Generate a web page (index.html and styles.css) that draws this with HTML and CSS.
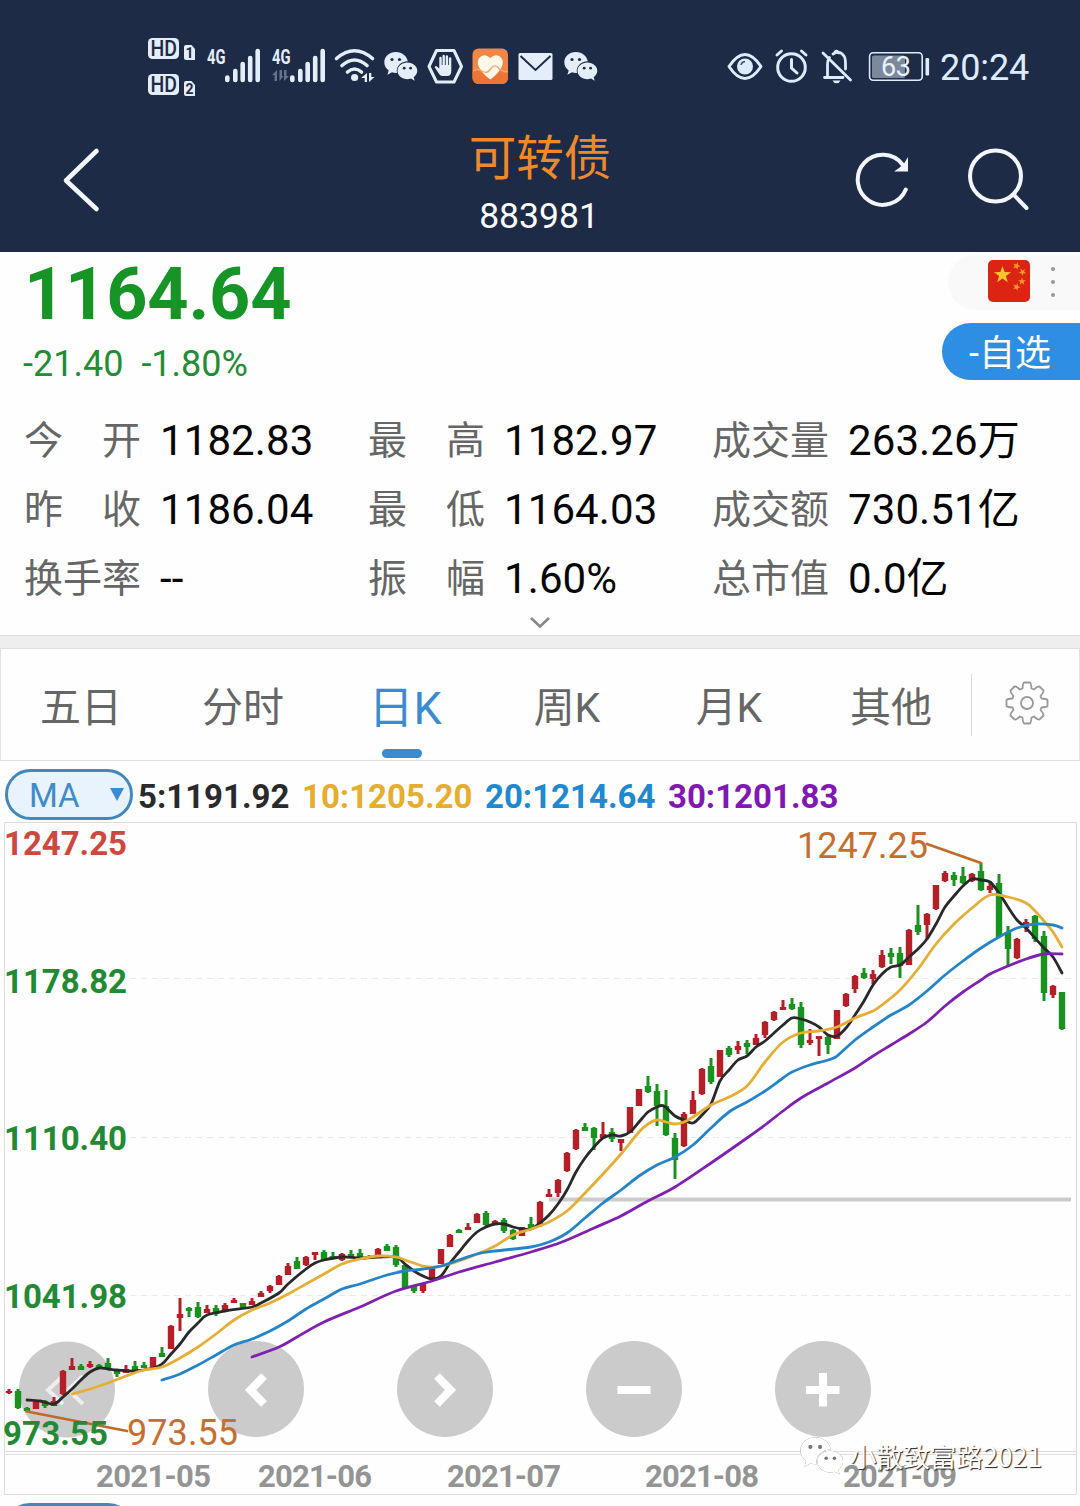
FILE: index.html
```html
<!DOCTYPE html>
<html lang="zh-CN">
<head>
<meta charset="utf-8">
<title>可转债 883981</title>
<link rel="stylesheet" href="styles.css">
</head>
<body>
<svg class="defs" width="0" height="0" aria-hidden="true">
  <defs>
    <symbol id="wechat" viewBox="0 0 34 29">
      <path d="M12 0C5.300 0 .3 4.600.3 10.300c0 3.400 1.700 6.200 4.400 8.200L3.400 22.800l4.600-2.500c1.300.4 2.600.6 4 .6h1C11.500 14.500 17 9.500 23.800 9.300 22.800 4 18 0 12 0Z"/>
      <path d="M23.400 10.400c-5.500 0-9.900 3.700-9.900 8.400s4.400 8.400 9.900 8.400c1.200 0 2.500-.2 3.600-.6l3.700 2.200-1-3.600c2.200-1.600 3.600-3.900 3.600-6.400 0-4.700-4.400-8.400-9.900-8.400Z"/>
      <g class="eyes"><circle cx="8" cy="7.500" r="1.600"/><circle cx="15.500" cy="7.500" r="1.600"/><circle cx="20.200" cy="16.200" r="1.400"/><circle cx="26.600" cy="16.200" r="1.400"/></g>
    </symbol>
    <path id="star" d="M0-10 2.350-3.240 9.510-3.090 3.800 1.240 5.880 8.090 0 4-5.880 8.090-3.800 1.240-9.510-3.090-2.350-3.240Z"/>
  </defs>
</svg>

<header class="top">
  <div class="status">
    <svg class="status-left" viewBox="140 30 470 75" width="470" height="75">
      <g fill="#e4eefb">
        <rect x="148" y="38" width="31" height="21" rx="4.500"/>
        <rect x="148" y="74" width="31" height="21" rx="4.500"/>
        <path d="M184 47a2 2 0 0 1 2-2h5.500l3.500 4v11h-9a2 2 0 0 1-2-2ZM184 83a2 2 0 0 1 2-2h5.500l3.500 4v11h-9a2 2 0 0 1-2-2Z"/>
      </g>
      <g class="hd"><text x="150.500" y="55.800" textLength="26.500" lengthAdjust="spacingAndGlyphs">HD</text><text x="150.500" y="91.800" textLength="26.500" lengthAdjust="spacingAndGlyphs">HD</text></g>
      <g class="sim"><text x="189.500" y="57.500">1</text><text x="189.500" y="93.500">2</text></g>
      <g class="net"><text x="207" y="64" textLength="18.500" lengthAdjust="spacingAndGlyphs">4G</text><text x="272" y="64" textLength="18.500" lengthAdjust="spacingAndGlyphs">4G</text></g>
      <path class="bars" d="M227.300 77.500v2.500M235.300 71v9M242.700 64v16M250.200 58v22M257.700 51v29M292.300 77.500v2.500M300.300 71v9M307.700 64v16M315.200 58v22M322.700 51v29"/>
      <path fill="#65738c" d="M277 70v11h-2.500v-6H272ZM279.500 81V70h2.500v6h1.500ZM284 70v11l5-5h-2.500v-6Z"/>
      <g fill="none" stroke="#e4eefb" stroke-width="3.600" stroke-linecap="round">
        <path d="M336.500 58.500Q354.500 43 372.500 58.500M342 65.500Q354.500 54.500 367 65.500M347.500 72Q354.500 66 361.500 72"/>
      </g>
      <circle cx="354.600" cy="77.500" r="3.600" fill="#e4eefb"/>
      <path fill="#e4eefb" d="M367 73v9h-2.300v-4H361ZM369 73v9l5.500-5h-3.200v-4Z"/>
      <use href="#wechat" class="wx" x="384" y="52" width="34" height="29"/>
      <path fill="none" stroke="#e4eefb" stroke-width="3" stroke-linejoin="round" d="M436.500 50.500h17.500l7.500 16-7.500 15.500h-17.500l-7.500-15.500Z"/>
      <path fill="#e4eefb" d="M439.500 74.500 434.800 67.500q-.5-1.500 1.500-1.500l3 2.500V58a1.200 1.200 0 0 1 2.400 0v7h.8v-9a1.200 1.200 0 0 1 2.400 0v9h.8v-8.500a1.200 1.200 0 0 1 2.400 0V65h.8v-6.500a1.200 1.200 0 0 1 2.400 0V71q0 5-4 5h-4.500q-2 0-3.300-1.500Z"/>
      <rect x="472.500" y="48.500" width="35.500" height="35.500" rx="6" fill="#f08647"/>
      <path fill="#ee7433" d="M472.500 72q5-3 9 0 5 3.500 9-3 4-5 9 0 4 3 8.500 2.500V78a6 6 0 0 1-6 6h-23.500a6 6 0 0 1-6-6Z"/>
      <path fill="#fff8e8" d="M490.300 79.500q-4-2.500-9-8.500-5.500-7.500-2.500-12.500 5-6 11.500-.5 6.500-5.500 11.500.5 3 5-2.500 12.500-5 6-9 8.500Z"/>
      <path fill="none" stroke="#f4a673" stroke-width="1.400" d="M473 71q5-3 9 0 5 3.500 8.500-2 4-6 8.500-.5 4 4 9 3"/>
      <rect x="518.500" y="53" width="34" height="27" rx="1.500" fill="#e4eefb"/>
      <path fill="none" stroke="#1e2b46" stroke-width="2" d="m520.500 56 15 14 15-14"/>
      <use href="#wechat" class="wx" x="564" y="52" width="34" height="29"/>
    </svg>
    <svg class="status-right" viewBox="720 30 215 75" width="215" height="75">
      <g fill="none" stroke="#dcebff" stroke-width="3" stroke-linecap="round">
        <path d="M729 66.500Q745 42.500 761 66.500 745 90.500 729 66.500Z" stroke-linejoin="round"/>
        <circle cx="791.500" cy="67.500" r="13.800"/>
        <path d="M791.500 59.500v8.500l5.500 5M777 55l4.500-4M806 55l-4.500-4"/>
        <path d="M823 53 850.500 80M824.500 77.500H843M827.500 76V64q0-4 2-6.500M833 54q7-4 11 2 1.500 2 1.500 8v5" stroke-width="2.800"/>
        <path d="M834.500 53q.5-2 2-2t2 2" stroke-width="2.500"/>
      </g>
      <circle cx="745" cy="66.500" r="8" fill="#dcebff"/>
      <path d="M741 65q.5-3 4-3.500" fill="none" stroke="#42506a" stroke-width="1.500"/>
      <path fill="#dcebff" d="M832.500 80.500h8q-1 2.700-4 2.700t-4-2.700Z"/>
      <rect x="872" y="55.500" width="33" height="22.500" rx="1.500" fill="#7d899b"/>
      <rect x="869.600" y="52.800" width="52.600" height="27.500" rx="3.500" fill="none" stroke="#dcebff" stroke-width="1.600"/>
      <rect x="925.500" y="58" width="3.600" height="17.500" rx="1.200" fill="#dcebff"/>
      <text class="level" x="881" y="76.300" textLength="30">63</text>
    </svg>
    <span class="clock">20:24</span>
  </div>
  <div class="nav">
    <svg class="back" viewBox="0 0 40 66" width="40" height="66"><path d="M35.500 4 5 33.500l30.500 28.500"/></svg>
    <div class="title"><h1>可转债</h1><span>883981</span></div>
    <svg class="refresh" viewBox="0 0 60 60" width="60" height="60"><path d="M50.800 40.500A25 25 0 1 1 47.500 15.500"/><path class="tip" d="M53 8v14.500H39l5-3.500L49 14.500Z"/></svg>
    <svg class="search" viewBox="0 0 66 66" width="66" height="66"><circle cx="29.500" cy="30" r="25.500"/><path d="M47.500 48.500 60.500 62"/></svg>
  </div>
</header>

<section class="quote">
  <div class="price-row">
    <div>
      <div class="price">1164.64</div>
      <div class="change"><span>-21.40</span><span>-1.80%</span></div>
    </div>
    <div class="side">
      <div class="market">
        <svg viewBox="0 0 42 42" width="42" height="42">
          <rect width="42" height="42" rx="5" fill="#dc2414"/>
          <g fill="#ffc42a"><use href="#star" transform="translate(14.500 15) scale(.9)"/></g>
          <g fill="#ff9a20"><use href="#star" transform="translate(28.500 6) rotate(20) scale(.4)"/><use href="#star" transform="translate(34.500 12) rotate(40) scale(.4)"/><use href="#star" transform="translate(34 21.500) scale(.4)"/><use href="#star" transform="translate(28.500 27) rotate(20) scale(.4)"/></g>
        </svg>
        <i class="more"><b></b><b></b><b></b></i>
      </div>
      <div class="watch">-自选</div>
    </div>
  </div>
  <dl class="stats">
    <div><dt><i>今</i><i>开</i></dt><dd>1182.83</dd></div>
    <div><dt><i>最</i><i>高</i></dt><dd>1182.97</dd></div>
    <div><dt><i>成</i><i>交</i><i>量</i></dt><dd>263.26万</dd></div>
    <div><dt><i>昨</i><i>收</i></dt><dd>1186.04</dd></div>
    <div><dt><i>最</i><i>低</i></dt><dd>1164.03</dd></div>
    <div><dt><i>成</i><i>交</i><i>额</i></dt><dd>730.51亿</dd></div>
    <div><dt><i>换</i><i>手</i><i>率</i></dt><dd>--</dd></div>
    <div><dt><i>振</i><i>幅</i></dt><dd>1.60%</dd></div>
    <div><dt><i>总</i><i>市</i><i>值</i></dt><dd>0.0亿</dd></div>
  </dl>
  <svg class="expand" viewBox="0 0 22 14" width="22" height="14"><path d="m2 2 9 8.500L20 2"/></svg>
</section>

<nav class="tabs">
  <span>五日</span><span>分时</span><span class="active">日K</span><span>周K</span><span>月K</span><span>其他</span>
  <div class="settings">
    <svg viewBox="-23 -23 46 46" width="46" height="46">
      <path d="M-4.500-14.500Q-4-20-3-20.500H3Q4-20 4.500-14.500L7-13.500Q11-17 12.500-16.500L16.500-12.500Q17-11 13.500-7L14.500-4.500Q20-4 20.500-3V3Q20 4 14.500 4.500L13.500 7Q17 11 16.500 12.500L12.500 16.500Q11 17 7 13.500L4.500 14.500Q4 20 3 20.500H-3Q-4 20-4.500 14.500L-7 13.500Q-11 17-12.500 16.500L-16.500 12.500Q-17 11-13.500 7L-14.500 4.500Q-20 4-20.500 3V-3Q-20-4-14.500-4.500L-13.500-7Q-17-11-16.500-12.500L-12.500-16.500Q-11-17-7-13.500Z"/>
      <circle r="6"/>
    </svg>
  </div>
</nav>

<div class="ma">
  <div class="ma-select"><span>MA</span><i></i></div>
  <span class="ma5">5:1191.92</span><span class="ma10">10:1205.20</span><span class="ma20">20:1214.64</span><span class="ma30">30:1201.83</span>
</div>

<main class="chart">
  <svg viewBox="0 820 1080 686" width="1080" height="686">
    <g class="frame">
      <path d="M4.500 1494.500V822.500H1076.500V1494.500M4.500 1451.500H1076.500M4.500 1454.500H1076.500M4.500 1494.500H1076.500"/>
      <path class="dash" d="M130 978.500H1076M130 1137.500H1076M130 1295.500H1076"/>
    </g>
    <g class="buttons">
      <circle cx="67" cy="1389.500" r="48"/><circle cx="256" cy="1389" r="48"/><circle cx="445" cy="1389" r="48"/><circle cx="634" cy="1389" r="48"/><circle cx="823" cy="1389" r="48"/>
      <path class="thin" d="M63 1376 48 1390 63 1404M83 1376 68 1390 83 1404"/>
      <path d="M264 1376 250.500 1390 264 1404M437 1376 450.500 1390 437 1404M617.500 1390H650.500M806 1390H839.500M823 1373V1406.500"/>
    </g>
    <path class="support" d="M549 1199.500H1071"/>
    <g id="candles"></g>
    <g class="lines">
      <g id="averages"></g>
      <path class="mark" d="M927 844 981 863M27 1411.500 127 1431"/>
    </g>
    <g class="axis">
      <text class="high" x="4" y="855" textLength="123">1247.25</text>
      <text x="4" y="993" textLength="123">1178.82</text>
      <text x="4" y="1150" textLength="123">1110.40</text>
      <text x="4" y="1308" textLength="123">1041.98</text>
      <text x="3" y="1445" textLength="105">973.55</text>
    </g>
    <g class="extreme">
      <text x="797" y="858" textLength="131">1247.25</text>
      <text x="127" y="1445" textLength="111">973.55</text>
    </g>
    <g class="dates">
      <text x="96" y="1487" textLength="115">2021-05</text>
      <text x="258" y="1487" textLength="114">2021-06</text>
      <text x="447" y="1487" textLength="114">2021-07</text>
      <text x="645" y="1487" textLength="114">2021-08</text>
      <text x="843" y="1487" textLength="114">2021-09</text>
    </g>
    <rect class="next" x="5" y="1504.500" width="128" height="50" rx="25"/>
  </svg>
  <div class="watermark">
    <svg width="44" height="38" viewBox="0 0 34 29"><use href="#wechat"/></svg>
    <span>小散致富路2021</span>
  </div>
</main>
<script src="chart.js"></script>
</body>
</html>
```
FILE: styles.css
```css
* { box-sizing: border-box; }
body {
  margin: 0;
  width: 1080px;
  height: 1506px;
  overflow: hidden;
  background: #fefefe;
  font-family: Roboto, "Noto Sans CJK SC", sans-serif;
  color: #050505;
}
i, b { font-style: normal; }
svg { display: block; flex: none; }
.defs { position: absolute; }

.top { height: 252px; background: #1e2b46; }
.status { display: flex; height: 105px; padding: 30px 0 0 140px; }
.status-right { margin-left: 110px; }
.clock { margin-left: 5px; font-size: 36px; line-height: 77px; color: #dcebff; letter-spacing: -.1px; }
.hd { font-size: 22px; font-weight: 500; fill: #1e2b46; }
.sim { font-size: 14px; font-weight: 700; fill: #1e2b46; text-anchor: middle; }
.net { font-size: 21px; font-weight: 700; fill: #e4eefb; }
.bars { stroke: #e4eefb; stroke-width: 4.600; stroke-linecap: round; }
.wx { fill: #e4eefb; --eye: #1e2b46; }
.eyes { fill: var(--eye, #777); }
.level { font-size: 27px; fill: #e9f2ff; }

.nav { display: flex; height: 147px; padding: 25px 0 0 61px; }
.nav svg { fill: none; stroke: #f2f6fc; stroke-width: 4.600; stroke-linecap: round; stroke-linejoin: round; }
.back { margin-top: 17px; }
.title { width: 204px; margin-left: 337px; text-align: center; color: #fff; }
.title h1 { margin: 0; font-size: 47.500px; line-height: 58px; font-weight: 400; color: #f0882c; }
.title span { display: block; margin: 7px 2px 0 0; font-size: 35.500px; line-height: 42px; }
.nav .refresh { margin: 19px 0 0 213px; stroke-width: 4; }
.nav .tip { fill: #f2f6fc; stroke: none; }
.nav .search { margin: 16px 0 0 51px; stroke-width: 4; }

.quote { height: 384px; border-bottom: 1px solid #dedede; }
.price-row { display: flex; justify-content: space-between; height: 155px; }
.price { padding: 1px 0 0 24px; font-size: 72px; line-height: 84px; font-weight: 700; color: #169426; letter-spacing: -.2px; }
.change { display: flex; gap: 18px; padding-left: 23px; font-size: 36px; line-height: 54px; color: #248c35; }
.side { display: flex; flex-direction: column; align-items: flex-end; width: 140px; padding-top: 3px; }
.market { display: flex; width: 132px; height: 55px; padding: 5px 0 0 40px; border-radius: 28px 0 0 28px; background: #f9f9f9; }
.more { display: flex; flex-direction: column; gap: 9px; margin: 7px 0 0 21px; }
.more b { width: 4px; height: 4px; border-radius: 50%; background: #999; }
.watch { width: 138px; height: 57px; margin-top: 13px; padding-left: 27px; border-radius: 29px 0 0 29px; background: #2e8ee3; color: #fff; font-size: 36px; line-height: 63px; }
.stats { display: grid; grid-template-columns: 344px 344px 1fr; grid-auto-rows: 69px; height: 207px; margin: 0; padding-left: 24px; }
.stats > div { display: flex; align-items: center; }
.stats dt { display: flex; justify-content: space-between; width: 117px; font-size: 39px; line-height: 69px; color: #666; }
.stats dd { margin: 0 0 2px 19px; font-size: 42px; line-height: 69px; letter-spacing: .1px; white-space: nowrap; }
.expand { margin: 2px 0 0 529px; fill: none; stroke: #888; stroke-width: 2.600; }

.tabs { display: flex; height: 125px; border-top: 12px solid #eee; box-shadow: inset 0 0 0 1px #e0e0e0; color: #666; font-size: 41px; line-height: 121px; }
.tabs > span { width: 162px; height: 113px; text-align: center; }
.tabs .active { display: flex; flex-direction: column; align-items: center; color: #3b8bd2; font-size: 45px; }
.tabs .active::after { content: ""; flex: none; width: 40px; height: 9px; margin: -20px 6px 0 0; border-radius: 5px; background: #388cd4; }
.settings { margin: 26px 0 0 -1px; height: 62px; padding: 6px 0 0 32px; border-left: 1px solid #ddd; }
.settings svg { fill: none; stroke: #999; stroke-width: 1.800; stroke-linejoin: round; }

.ma { display: flex; height: 59px; padding: 8px 0 0 5px; font-size: 33px; font-weight: 700; line-height: 56px; }
.ma-select { display: flex; align-items: center; width: 128px; height: 51px; margin-right: 5px; padding-left: 21px; border: 3px solid #4288ba; border-radius: 26px; background: #e9f3fe; color: #408bc8; font-size: 33px; font-weight: 400; }
.ma-select span { width: 81px; padding-top: 3px; }
.ma-select i { border: 7px solid transparent; border-top: 13px solid #3c8bd2; border-bottom: 0; }
.ma5 { width: 164px; color: #2a2a2c; }
.ma10 { width: 183px; color: #e6ad2e; }
.ma20 { width: 183px; color: #2088ce; }
.ma30 { color: #8118b6; }

.chart { position: relative; height: 686px; }
.frame { fill: none; stroke: #ddd; stroke-width: 1; }
.dash { stroke: #e9e9e9; stroke-dasharray: 6 5; }
.buttons circle { fill: #cbcbcb; }
.buttons path { fill: none; stroke: #fff; stroke-width: 8; }
.buttons .thin { stroke: #eee; stroke-width: 4; }
.support { stroke: #ccc; stroke-width: 4; }
.up { stroke: #b51f27; }
.down { stroke: #1a9220; }
.body { stroke-width: 6.400; }
.wick { stroke-width: 3; }
.lines { fill: none; stroke-width: 2.800; stroke-linecap: round; stroke-linejoin: round; }
.l5 { stroke: #29292b; }
.l10 { stroke: #e5ae35; }
.l20 { stroke: #2484c8; }
.l30 { stroke: #8020b0; }
.mark { stroke: #c06a28; }
.axis { font-size: 33px; font-weight: 700; fill: #238a34; }
.axis .high { fill: #ce483f; }
.extreme { font-size: 36px; fill: #c46f2f; }
.dates { font-size: 31px; font-weight: 700; fill: #949494; }
.next { fill: #e9f3fe; stroke: #4288ba; stroke-width: 3; }

.watermark { position: absolute; left: 800px; top: 617px; display: flex; gap: 6px; color: #fff; font: 26.600px/38px "Noto Sans CJK SC", sans-serif; text-shadow: 1px 1px 1px #222; }
.watermark svg { fill: #fff; overflow: visible; filter: drop-shadow(.5px .5px .5px #555); }
```
FILE: chart.js
```js
// One entry per trading day: colour, body top, body bottom, wick top, wick bottom.
const days = `r 1391 1393 1389 1394|g 1391 1408 1389 1409|g 1408 1411 1407 1412|r 1402 1409 1401 1409|g 1401 1406 1400 1408
r 1401 1406 1397 1406|r 1371 1394 1370 1395|r 1366 1370 1358 1370|g 1366 1370 1364 1370|r 1364 1367 1361 1368
g 1365 1369 1364 1369|g 1363 1369 1358 1369|g 1369 1374 1369 1377|r 1369 1373 1365 1373|g 1366 1370 1361 1370
g 1365 1368 1362 1368|r 1357 1367 1357 1367|g 1353 1357 1347 1357|r 1326 1349 1325 1349|r 1314 1318 1298 1331
g 1308 1311 1307 1317|g 1307 1317 1302 1318|r 1309 1313 1305 1313|g 1308 1314 1305 1316|r 1305 1310 1303 1311
r 1300 1303 1298 1303|g 1303 1308 1303 1308|r 1301 1305 1298 1305|r 1293 1297 1291 1297|r 1286 1291 1285 1293
r 1276 1285 1275 1285|r 1266 1275 1263 1275|g 1261 1269 1257 1269|r 1257 1265 1256 1266|r 1252 1255 1252 1260
g 1252 1260 1250 1260|g 1256 1259 1252 1259|r 1254 1260 1253 1261|g 1254 1258 1250 1258|g 1253 1258 1249 1258
g 1256 1259 1255 1259|r 1249 1256 1248 1256|g 1246 1251 1244 1251|g 1247 1265 1245 1267|g 1265 1289 1264 1289
g 1286 1291 1286 1293|r 1283 1291 1283 1293|r 1267 1279 1267 1279|r 1249 1264 1249 1264|r 1235 1247 1234 1247
g 1230 1233 1229 1233|r 1227 1230 1223 1230|r 1214 1223 1213 1223|g 1213 1225 1211 1226|r 1221 1224 1220 1224
g 1220 1231 1218 1233|g 1230 1239 1229 1240|r 1227 1236 1227 1236|g 1224 1228 1217 1228|r 1202 1226 1201 1227
r 1194 1197 1189 1197|r 1180 1193 1179 1197|r 1153 1171 1152 1172|r 1130 1149 1129 1150|g 1127 1131 1123 1131
g 1128 1138 1127 1150|r 1134 1138 1122 1138|g 1132 1139 1128 1142|r 1139 1143 1139 1151|r 1107 1133 1107 1133
r 1089 1106 1089 1106|g 1086 1092 1076 1093|g 1091 1106 1084 1126|g 1106 1135 1090 1136|g 1138 1160 1133 1179
r 1114 1146 1112 1147|r 1100 1114 1091 1114|r 1069 1094 1068 1095|g 1066 1082 1058 1084|r 1050 1077 1050 1077
g 1048 1055 1046 1057|r 1046 1050 1041 1054|g 1043 1047 1040 1054|r 1038 1045 1034 1045|r 1022 1035 1021 1038
r 1012 1020 1011 1021|r 1007 1010 1000 1010|g 1004 1009 998 1010|g 1007 1045 1002 1048|r 1040 1043 1029 1045
r 1036 1039 1036 1056|g 1037 1045 1035 1054|r 1010 1039 1010 1039|r 994 1006 993 1007|r 976 989 975 993
g 973 978 968 979|r 974 979 970 984|r 955 967 950 968|g 953 957 948 964|g 953 966 947 978
r 930 965 929 965|g 925 932 905 935|r 914 925 913 939|r 885 909 885 910|r 873 881 871 882
g 875 880 872 886|g 876 883 867 884|r 874 881 873 882|g 871 890 863 891|r 886 890 881 893
g 883 937 874 937|g 932 949 926 967|r 939 958 938 959|r 922 928 919 932|g 916 939 915 942
g 936 993 931 1001|r 986 995 985 998|g 992 1029 992 1030`;

const paths = { r: { body: "", wick: "" }, g: { body: "", wick: "" } };
days.split(/[|\n]/).forEach((day, i) => {
  const [colour, top, bottom, high, low] = day.trim().split(" ");
  const x = 9 + i * 9;
  paths[colour].body += `M${x} ${top}V${bottom}`;
  paths[colour].wick += `M${x} ${high}V${low}`;
});
document.getElementById("candles").innerHTML = [["r", "up"], ["g", "down"]].map(([c, name]) =>
  `<path class="${name} body" d="${paths[c].body}"/><path class="${name} wick" d="${paths[c].wick}"/>`).join("");

// Moving averages as x,y pairs, drawn as smooth curves.
const averages = {
  l5: "27,1400 40,1401 54,1404 63,1397 72,1389 81,1380 90,1372 99,1368 108,1369 117,1370 135,1371 153,1368 162,1364 171,1354 180,1344 189,1332 198,1323 207,1315 225,1311 252,1307 261,1303 279,1293 288,1284 306,1269 315,1263 324,1260 342,1257 360,1258 378,1257 396,1257 405,1264 414,1271 423,1276 432,1279 441,1276 450,1263 459,1252 468,1241 477,1232 486,1227 495,1224 504,1224 513,1227 522,1229 531,1229 540,1223 549,1215 558,1204 567,1190 576,1172 585,1158 594,1147 603,1138 612,1135 621,1136 630,1132 639,1122 648,1112 657,1107 664,1106 675,1116 684,1120 693,1123 702,1115 711,1104 720,1081 729,1070 738,1060 747,1056 756,1047 765,1041 774,1033 783,1025 792,1018 801,1019 810,1022 819,1027 828,1035 837,1036 846,1028 855,1015 864,1001 873,985 882,974 891,967 900,965 909,957 918,949 927,939 936,924 945,907 954,896 963,886 972,879 981,880 990,882 999,893 1008,907 1017,920 1026,928 1035,938 1044,948 1053,957 1062,973",
  l10: "72,1394 90,1389 108,1383 126,1376 144,1370 162,1367 180,1358 198,1347 216,1334 234,1320 252,1310 270,1303 288,1294 306,1284 324,1274 342,1264 360,1259 378,1256 396,1257 405,1260 423,1266 436,1267 453,1263 480,1253 495,1246 513,1235 531,1229 549,1222 567,1211 585,1193 603,1174 621,1154 639,1132 648,1124 657,1120 666,1122 675,1124 684,1122 693,1117 711,1105 729,1097 747,1086 765,1062 783,1042 801,1033 819,1031 837,1027 855,1018 873,1011 882,1005 900,990 918,969 936,944 954,924 972,908 990,895 1008,897 1026,903 1035,911 1044,921 1053,932 1062,947",
  l20: "162,1380 180,1374 198,1365 216,1355 234,1345 252,1339 270,1331 288,1321 306,1309 324,1299 342,1289 360,1284 387,1275 405,1271 423,1269 441,1266 459,1260 477,1254 495,1251 531,1247 549,1242 567,1233 585,1218 603,1203 621,1190 639,1176 657,1165 675,1157 693,1145 711,1128 729,1112 747,1102 765,1091 783,1078 792,1072 810,1065 828,1060 837,1056 855,1040 873,1027 891,1015 909,1005 927,991 945,975 963,961 981,948 999,937 1017,928 1035,924 1053,925 1062,928",
  l30: "252,1357 279,1347 297,1337 324,1322 360,1307 396,1291 432,1281 459,1272 495,1262 531,1252 562,1242 594,1228 621,1216 648,1201 675,1187 711,1163 747,1138 765,1125 783,1111 801,1098 828,1083 855,1068 873,1056 891,1045 909,1034 927,1022 945,1006 963,992 981,980 990,974 1008,966 1026,959 1044,954 1062,954"
};

function smooth(text) {
  const p = text.split(" ").map(pair => pair.split(",").map(Number));
  let d = `M${p[0]}`;
  for (let i = 0; i < p.length - 1; i++) {
    const a = p[i - 1] || p[i], b = p[i], c = p[i + 1], e = p[i + 2] || c;
    d += `C${b[0] + (c[0] - a[0]) / 6} ${b[1] + (c[1] - a[1]) / 6} ${c[0] - (e[0] - b[0]) / 6} ${c[1] - (e[1] - b[1]) / 6} ${c[0]} ${c[1]}`;
  }
  return d;
}
document.getElementById("averages").innerHTML = Object.entries(averages)
  .map(([name, points]) => `<path class="${name}" d="${smooth(points)}"/>`).join("");
```
